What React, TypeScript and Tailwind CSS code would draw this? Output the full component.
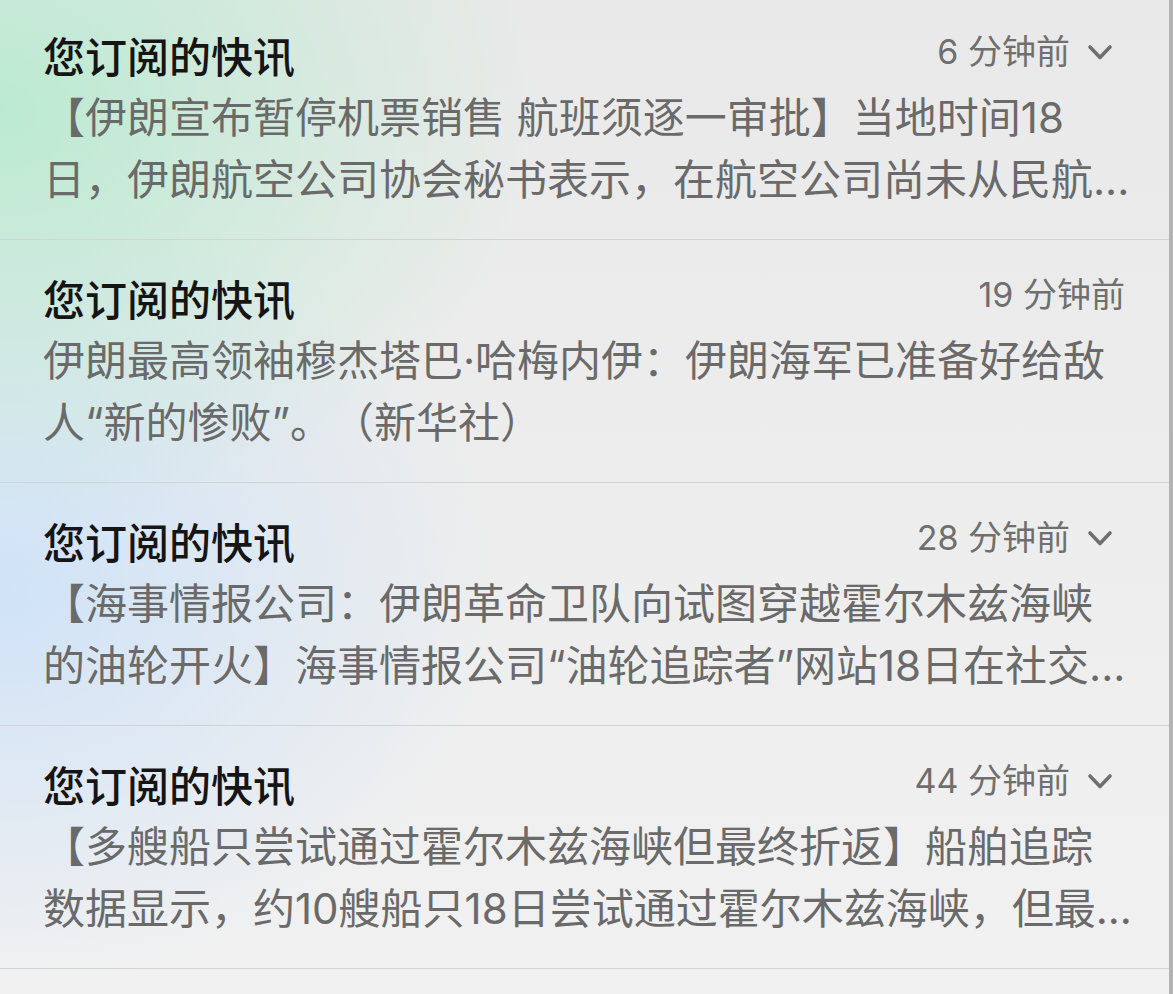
const items = [
  {
    time: '6 分钟前',
    chevron: true,
    lines: ['【伊朗宣布暂停机票销售 航班须逐一审批】当地时间18', '日，伊朗航空公司协会秘书表示，在航空公司尚未从民航...'],
  },
  {
    time: '19 分钟前',
    chevron: false,
    lines: ['伊朗最高领袖穆杰塔巴·哈梅内伊：伊朗海军已准备好给敌', '人“新的惨败”。（新华社）'],
  },
  {
    time: '28 分钟前',
    chevron: true,
    lines: ['【海事情报公司：伊朗革命卫队向试图穿越霍尔木兹海峡', '的油轮开火】海事情报公司“油轮追踪者”网站18日在社交...'],
  },
  {
    time: '44 分钟前',
    chevron: true,
    lines: ['【多艘船只尝试通过霍尔木兹海峡但最终折返】船舶追踪', '数据显示，约10艘船只18日尝试通过霍尔木兹海峡，但最...'],
  },
];

function Chevron() {
  return (
    <svg width="26" height="17" viewBox="0 0 26 17" className="ml-[17px] mr-[12px]">
      <path d="M3 3 L13 13.5 L23 3" fill="none" stroke="#6f6f6f" strokeWidth="3.6" strokeLinecap="round" strokeLinejoin="round" />
    </svg>
  );
}

export default function App() {
  return (
    <div className="flex h-[994px] w-[1173px] overflow-hidden bg-[#ececec] font-['Inter','Noto_Sans_CJK_SC',sans-serif] [text-spacing-trim:space-all]">
      <div className="flex-1 overflow-hidden bg-[radial-gradient(ellipse_540px_420px_at_0%_110px,rgba(182,234,207,0.9),transparent),radial-gradient(ellipse_500px_400px_at_0%_590px,rgba(200,224,250,0.8),transparent),linear-gradient(to_bottom,#e9e9e9,#f1f1f1)]">
        <div className="-mt-[3px]">
          {items.map((item, i) => (
            <div key={i} className="flex flex-col border-b border-[#d3d3d3] pt-[29px] pb-[28px] pl-[43px] pr-[44px]">
              {/* header */}
              <div className="flex h-[58px] items-center justify-between">
                <span className="font-['Noto_Sans_CJK_SC',sans-serif] text-[42px] font-medium leading-[58px] text-[#151515]">您订阅的快讯</span>
                <div className="mb-[6px] flex items-center text-[34px] leading-[50px] text-[#6f6f6f]">
                  <span>{item.time}</span>
                  {item.chevron && <Chevron />}
                </div>
              </div>
              {/* body */}
              <div className="mt-[3px] text-[42px] leading-[62px] text-[#6a6a6a]">
                {item.lines.map((l, j) => (
                  <div key={j} className="whitespace-nowrap">{l}</div>
                ))}
              </div>
            </div>
          ))}
        </div>
      </div>
      <div className="w-[4px] bg-[#b3b3b3]" />
    </div>
  );
}
